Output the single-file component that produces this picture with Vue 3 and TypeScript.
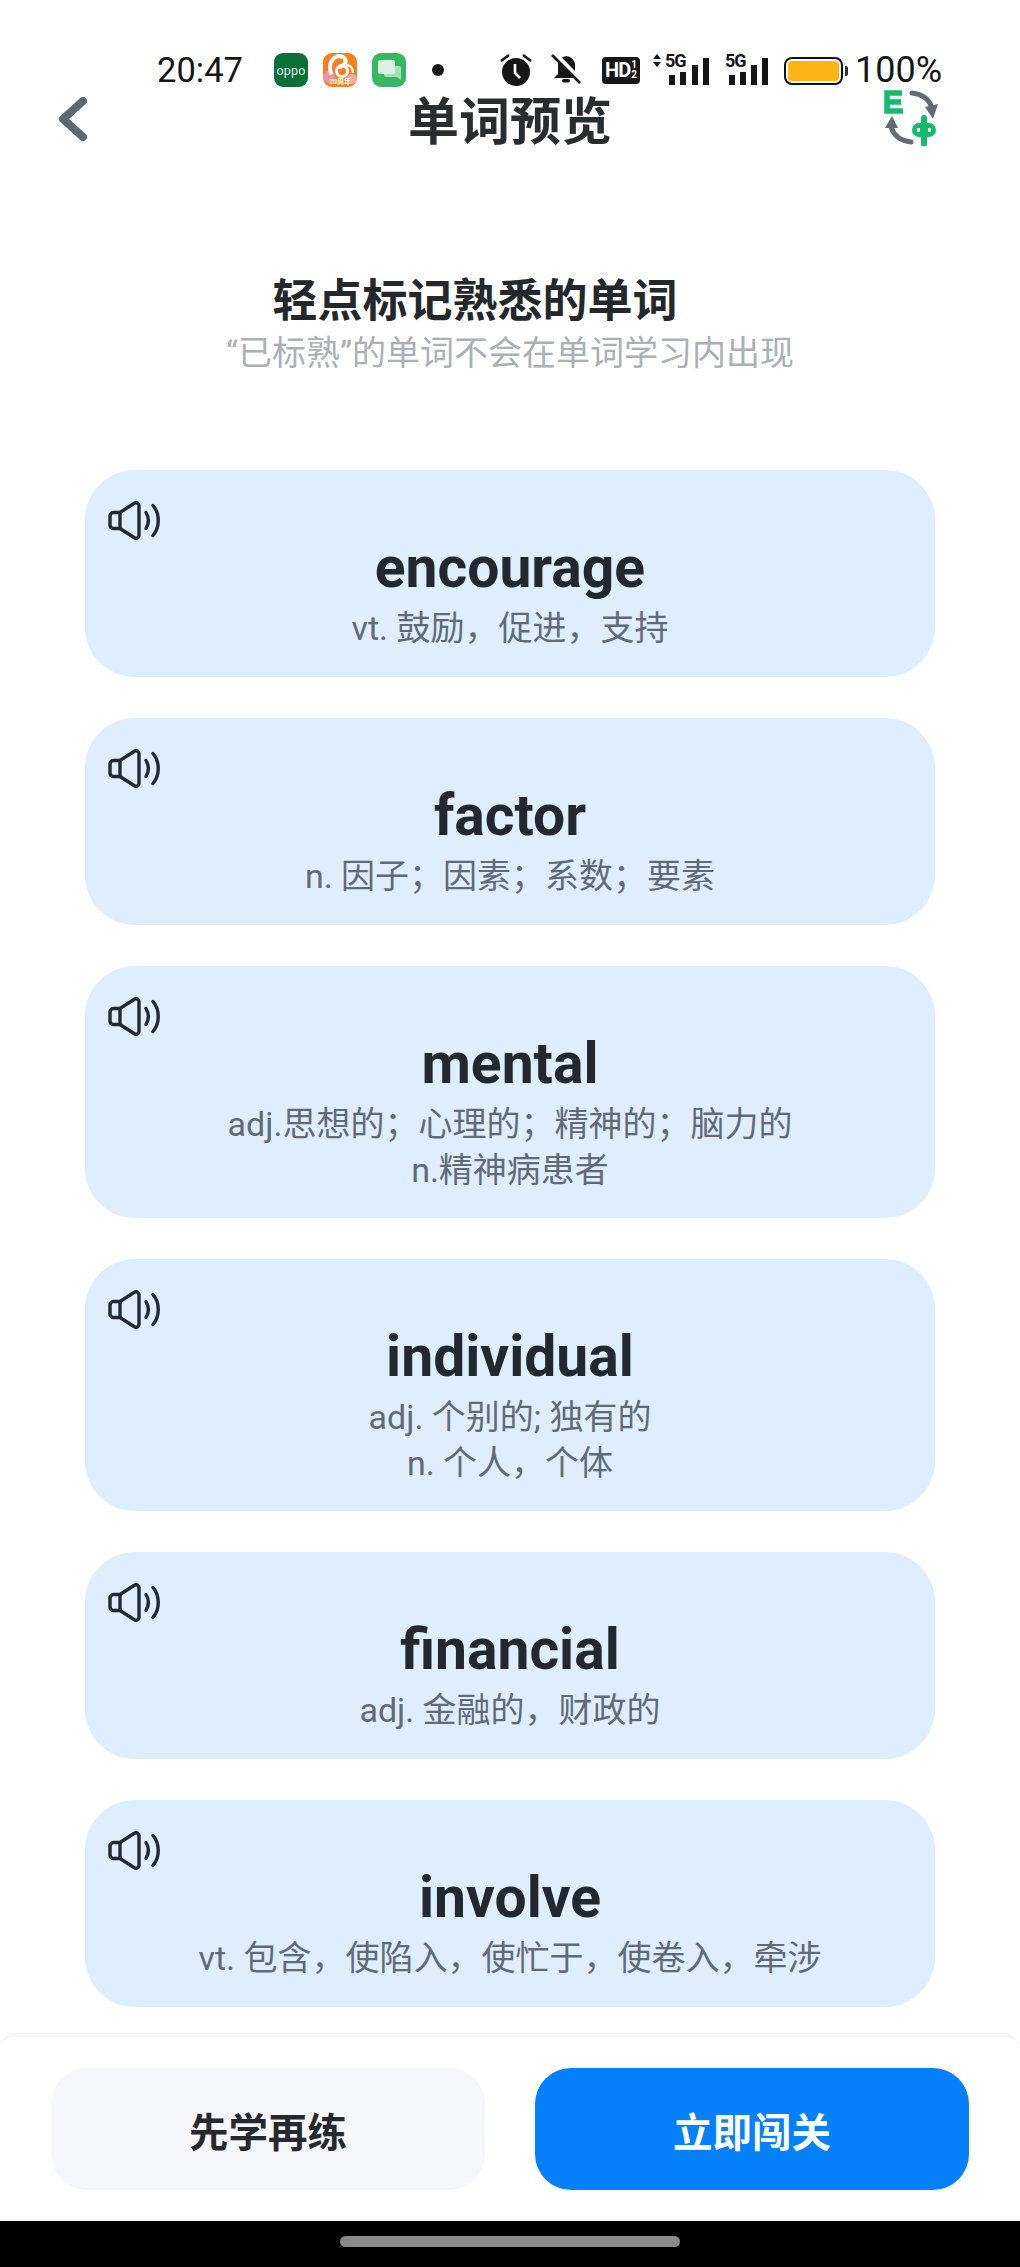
<script setup lang="ts">
interface Word { word: string; defs: string[] }
const words: Word[] = [
  { word: 'encourage', defs: ['vt. 鼓励，促进，支持'] },
  { word: 'factor', defs: ['n. 因子；因素；系数；要素'] },
  { word: 'mental', defs: ['adj.思想的；心理的；精神的；脑力的', 'n.精神病患者'] },
  { word: 'individual', defs: ['adj. 个别的; 独有的', 'n. 个人，个体'] },
  { word: 'financial', defs: ['adj. 金融的，财政的'] },
  { word: 'involve', defs: ['vt. 包含，使陷入，使忙于，使卷入，牵涉'] },
]
</script>

<template>
  <div class="page">
    <div class="status">
      <span class="time">20:47</span>
      <span class="app oppo">oppo</span>
      <span class="app orange">
        <svg viewBox="0 0 34 34" width="34" height="34">
          <circle cx="6" cy="24" r="6" fill="#f78fa0"/>
          <circle cx="29" cy="26" r="5" fill="#f9a8a0"/>
          <path d="M8 20c-3-8 1-16 8-17 5 0 8 4 6 8l-5 3" fill="none" stroke="#fff" stroke-width="4" stroke-linecap="round"/>
          <circle cx="19" cy="18" r="5.5" fill="none" stroke="#fff" stroke-width="3"/>
          <path d="M23 12c4 0 7 3 7 8" fill="none" stroke="#fff" stroke-width="2.5"/>
        </svg>
        <span class="anniv">20周年</span>
      </span>
      <span class="app green">
        <svg viewBox="0 0 34 34" width="34" height="34"><path d="M14 13h13a2 2 0 0 1 2 2v12l-4-3H14a2 2 0 0 1-2-2v-7a2 2 0 0 1 2-2z" fill="#a9dfb8"/><rect x="6" y="7" width="17" height="14" rx="2" fill="#dcf2e1"/></svg>
      </span>
      <span class="dot"></span>
      <svg class="alarm" viewBox="0 0 32 33" width="32" height="33"><circle cx="16" cy="19" r="14" fill="#161616"/><path d="M15 11v9l5 5" stroke="#fff" stroke-width="2.6" fill="none"/><path d="M1 8l8-6M31 8l-8-6" stroke="#161616" stroke-width="2.6"/></svg>
      <svg class="bell" viewBox="0 0 30 30" width="30" height="30"><path d="M15 2a9 9 0 0 1 9 9v9l4 4H3l4-4v-9a9 9 0 0 1 9-9z" fill="#161616"/><rect x="11" y="25" width="8" height="3.5" rx="1.7" fill="#161616"/><path d="M3 -1l28 29" stroke="#fff" stroke-width="5"/><path d="M1 1l28 28" stroke="#161616" stroke-width="2.6"/></svg>
      <span class="hd">HD<span class="frac">1<br>2</span></span>
      <span class="arrows"><i class="up"></i><i class="down"></i></span>
      <span class="signal first"><b>5G</b><span class="bars"><i class="b1"></i><i class="b2"></i><i class="b3"></i><i class="b4"></i></span></span>
      <span class="signal second"><b>5G</b><span class="bars"><i class="b1"></i><i class="b2"></i><i class="b3"></i><i class="b4"></i></span></span>
      <span class="battery"><span class="fill"></span></span>
      <span class="percent">100%</span>
    </div>

    <header class="nav">
      <svg class="back" viewBox="0 0 30 44" width="30" height="44"><path d="M25 4L5 22l20 18" fill="none" stroke="#5f6870" stroke-width="8" stroke-linecap="round" stroke-linejoin="round"/></svg>
      <h1 class="title">单词预览</h1>
      <svg class="swap" viewBox="0 0 54 56" width="54" height="56">
        <path d="M18 3H3v18h16M3 12h14" stroke="#16b96d" stroke-width="5.5" fill="none"/>
        <path d="M28 3c10 1 17 6 20 15" stroke="#646b73" stroke-width="5" fill="none" stroke-linecap="round"/>
        <path d="M41 17l13-3-5 15z" fill="#646b73"/>
        <path d="M27 52c-10-1-17-6-20-15" stroke="#646b73" stroke-width="5" fill="none" stroke-linecap="round"/>
        <path d="M8 26L1 38l13 0z" fill="#646b73"/>
        <rect x="28" y="33" width="24" height="14" rx="7" fill="#16b96d"/>
        <path d="M40 28v26" stroke="#16b96d" stroke-width="6" stroke-linecap="round"/>
        <path d="M33 40h3M44 40h3" stroke="#fff" stroke-width="3.5"/>
      </svg>
    </header>

    <section class="intro">
      <h2 class="heading">轻点标记熟悉的单词</h2>
      <p class="sub">“已标熟”的单词不会在单词学习内出现</p>
    </section>

    <main class="list">
      <article v-for="w in words" :key="w.word" class="card" :class="{ tall: w.defs.length > 1 }">
        <svg class="speaker" viewBox="0 0 52 39" width="52" height="39">
          <path d="M12 11.5H5.5A3.5 3.5 0 0 0 2 15v9a3.500 3.500 0 0 0 3.500 3.500H12L26 36.500a3 3 0 0 0 5-2.500V5a3 3 0 0 0-5-2.500z" fill="none" stroke="#1f2a33" stroke-width="3.400" stroke-linejoin="round"/>
          <path d="M12 11.500v16" stroke="#1f2a33" stroke-width="3.400"/>
          <path d="M38 11.500c3 5 3 11 0 16" fill="none" stroke="#1f2a33" stroke-width="3.400" stroke-linecap="round"/>
          <path d="M45 4.500c7 8 7 22 0 30" fill="none" stroke="#1f2a33" stroke-width="3.400" stroke-linecap="round"/>
        </svg>
        <div class="word">{{ w.word }}</div>
        <div v-for="d in w.defs" :key="d" class="def">{{ d }}</div>
      </article>
    </main>

    <footer class="footer">
      <button class="btn later">先学再练</button>
      <button class="btn go">立即闯关</button>
    </footer>
    <div class="navbar"><span class="home"></span></div>
  </div>
</template>

<style>
html, body { margin: 0; background: #fff; }
</style>

<style scoped>
.page {
  width: 1020px;
  height: 2267px;
  overflow: hidden;
  background: #fff;
  display: flex;
  flex-direction: column;
  font-family: Roboto, "Noto Sans CJK SC", sans-serif;
  color: #22272b;
}
.status {
  height: 50px;
  padding-top: 45px;
  padding-left: 157px;
  display: flex;
  align-items: center;
  color: #161616;
}
.time { font-size: 34.500px; width: 117px; line-height: 1; }
.app {
  position: relative;
  width: 34px; height: 34px; border-radius: 9px;
  display: flex; align-items: center; justify-content: center;
  margin-right: 15px;
  overflow: hidden;
}
.oppo { background: #0a703a; color: #d8f5e4; font-size: 12.500px; letter-spacing: .2px; }
.orange { background: #f5801f; }
.anniv {
  position: absolute; left: 0; right: 0; bottom: 1px;
  font-size: 7px; font-weight: 700; line-height: 8px; color: #fff; text-align: center; white-space: nowrap;
}
.green { background: #35b863; }
.dot { width: 12px; height: 12px; border-radius: 50%; background: #161616; margin-left: 11px; margin-right: 56px; }
.alarm { margin-right: 19px; margin-top: -2px; }
.bell { margin-right: 21px; margin-top: -2px; }
.hd {
  width: 38px; height: 27px; background: #161616; color: #fff; border-radius: 4px;
  font-size: 20px; font-weight: 700; display: flex; align-items: center; justify-content: center;
  letter-spacing: -1px; margin-right: 13px;
}
.frac { font-size: 10px; line-height: 10px; letter-spacing: 0; margin-left: 1px; text-align: center; }
.arrows { display: flex; flex-direction: column; gap: 3px; width: 10px; margin-top: -19px; margin-right: 2px; }
.arrows i { display: block; width: 0; height: 0; border-left: 4.500px solid transparent; border-right: 4.500px solid transparent; }
.up { border-bottom: 5px solid #161616; }
.down { border-top: 5px solid #161616; }
.signal { position: relative; display: block; height: 30px; }
.signal.first { width: 44px; margin-right: 16px; }
.signal.second { width: 43px; margin-right: 16px; }
.signal b {
  position: absolute; left: 0; top: -2px;
  font-size: 18px; font-weight: 700; line-height: 16px; letter-spacing: -1px;
}
.bars { position: absolute; left: 4px; right: 0; bottom: 0; display: flex; align-items: flex-end; gap: 5.300px; height: 27px; }
.bars i { display: block; width: 6px; background: #161616; }
.b1 { height: 10px; }
.b2 { height: 13px; }
.b3 { height: 20px; }
.b4 { height: 27px; }
.battery {
  width: 59px; height: 28px; border: 2.500px solid #111; border-radius: 8px; box-sizing: border-box;
  padding: 2px; position: relative; margin-right: 12px; margin-top: 1px;
}
.battery::after { content: ""; position: absolute; right: -7px; top: 7px; width: 3px; height: 10px; background: #333; border-radius: 0 2px 2px 0; }
.fill { display: block; width: 100%; height: 100%; background: #fdb515; border-radius: 4px; }
.percent { font-size: 36px; line-height: 1; }
.nav {
  height: 55px;
  padding: 0 82px;
  display: grid;
  grid-template-columns: 1fr auto 1fr;
  align-items: center;
}
.back { margin-left: -24px; margin-top: -7px; }
.swap { justify-self: end; margin-top: -9px; }
.title { margin: 0; font-size: 51px; font-weight: 700; color: #2a2d30; line-height: 1; }
.intro { padding-top: 124px; text-align: center; }
.heading { margin: 0; font-size: 45px; font-weight: 700; line-height: 56px; color: #24282b; padding-right: 70px; }
.sub { margin: 0; font-size: 34px; line-height: 46px; color: #aab0b5; }
.list {
  margin-top: 94px;
  padding: 0 85px;
  display: flex;
  flex-direction: column;
  gap: 41px;
}
.card {
  position: relative;
  height: 207px;
  border-radius: 50px;
  background: #deeeff;
  text-align: center;
  padding-top: 65px;
  box-sizing: border-box;
}
.card.tall { height: 252px; }
.speaker { position: absolute; left: 23px; top: 31px; }
.word { font-size: 57px; font-weight: 700; line-height: 66px; margin-bottom: 4px; color: #22292e; }
.def { font-size: 34px; line-height: 46px; color: #5f6b78; }
.footer {
  margin-top: 26px;
  height: 188px;
  flex: none;
  box-sizing: border-box;
  border-top: 4px solid #f5f5f6;
  border-radius: 16px 16px 0 0;
  padding: 31px 51px 0;
  display: flex;
  gap: 50px;
  background: #fff;
}
.btn {
  width: 434px; height: 122px; border: none; border-radius: 36px;
  font-family: inherit; font-size: 39.500px; font-weight: 700;
}
.later { background: #f6f7fb; color: #26292d; }
.go { background: #0580fb; color: #fff; }
.navbar { flex: 1; background: #000; display: flex; justify-content: center; padding-top: 15px; box-sizing: border-box; }
.home { width: 340px; height: 11px; border-radius: 6px; background: #8a8a8a; }
</style>
